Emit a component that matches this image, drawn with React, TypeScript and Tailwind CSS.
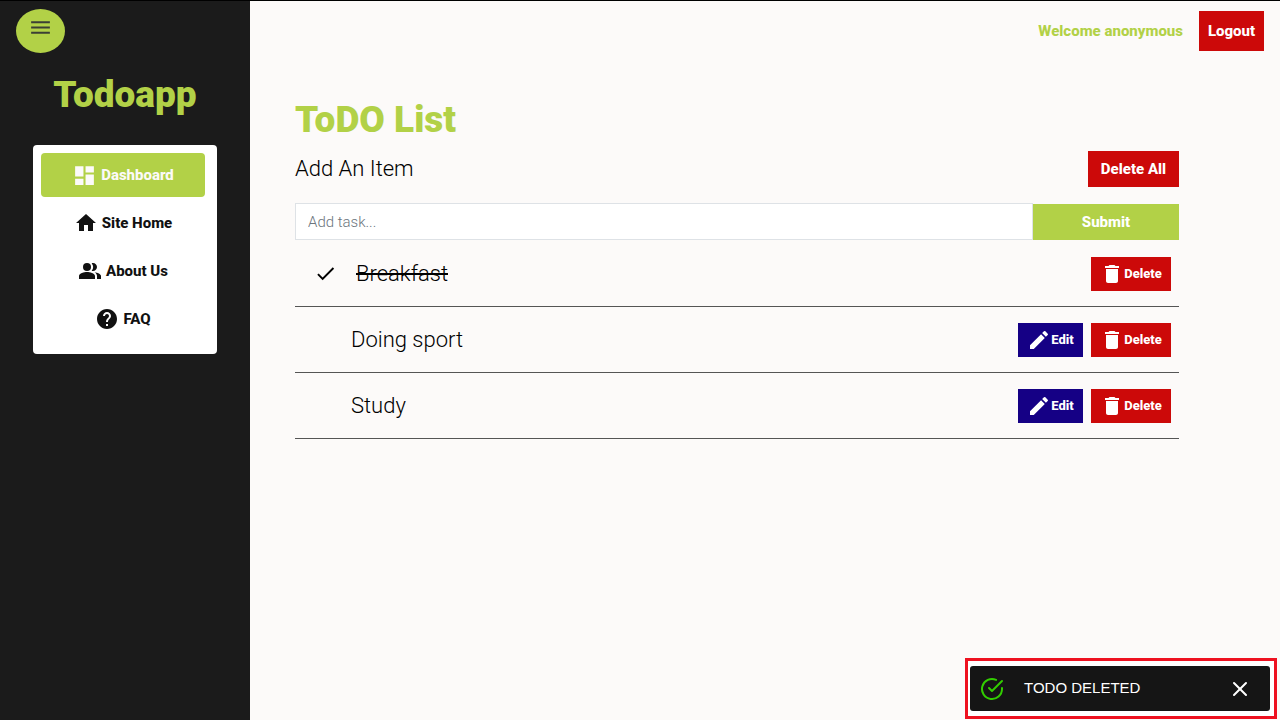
import type { ReactNode } from "react";
import { MdCheck, MdDashboard, MdDelete, MdEdit, MdHelp, MdHome, MdMenu, MdPeopleAlt } from "react-icons/md";
import { FiCheckCircle } from "react-icons/fi";
import { X } from "lucide-react";

type Todo = { id: number; title: string; done: boolean };

const todos: Todo[] = [
  { id: 1, title: "Breakfast", done: true },
  { id: 2, title: "Doing sport", done: false },
  { id: 3, title: "Study", done: false },
];

function NavItem({ icon, label, active = false }: { icon: ReactNode; label: string; active?: boolean }) {
  return (
    <li>
      <a
        href="#"
        aria-current={active ? "page" : undefined}
        className={`flex h-11 items-center justify-center gap-1 rounded font-extrabold ${
          active ? "bg-[#b2d147] text-[#fcfaf9]" : "text-[#111]"
        }`}
      >
        {icon}
        {label}
      </a>
    </li>
  );
}

function Sidebar() {
  return (
    <aside className="w-[250px] shrink-0 bg-[#1b1b1b]">
      <div className="px-4 pt-2">
        <button aria-label="Toggle menu" className="flex h-11 w-[49px] items-start justify-center rounded-[50%] bg-[#b2d147] pt-[6px] text-[#3b3f35]">
          <MdMenu size={25} />
        </button>
      </div>
      <h1 className="mt-5 text-center text-[37px] leading-[44px] font-black text-[#b2d147]">Todoapp</h1>
      <nav className="mx-[33px] mt-7 rounded bg-white pt-2 pr-3 pb-[13px] pl-2">
        <ul className="flex flex-col gap-1">
          <NavItem active icon={<MdDashboard size={25} />} label="Dashboard" />
          <NavItem icon={<MdHome size={24} />} label="Site Home" />
          <NavItem icon={<MdPeopleAlt size={24} />} label="About Us" />
          <NavItem icon={<MdHelp size={24} />} label="FAQ" />
        </ul>
      </nav>
    </aside>
  );
}

function TodoRow({ todo }: { todo: Todo }) {
  return (
    <li className="flex h-[66px] items-center gap-2 border-b border-[#555] pr-2">
      {todo.done && <MdCheck size={23} className="ml-[19px]" aria-label="Done" />}
      <span className={`grow text-[22px] leading-8 font-light ${todo.done ? "ml-[11px] line-through" : "ml-14"}`}>
        {todo.title}
      </span>
      {!todo.done && (
        <button className="flex h-[34px] w-[65px] items-center justify-center bg-[#150085] text-[13px] font-extrabold text-white">
          <MdEdit size={24} />
          Edit
        </button>
      )}
      <button className="flex h-[34px] w-20 items-center justify-center bg-[#cc0909] text-[13px] font-extrabold text-white">
        <MdDelete size={24} />
        Delete
      </button>
    </li>
  );
}

function Toast() {
  return (
    <div role="status" className="fixed right-[3px] bottom-px border-[3px] border-[#ee1120] bg-white py-[5px] pr-1 pl-[2px]">
      <div className="flex h-[45px] w-[300px] items-center rounded-[3px] bg-[#151515] pr-[18px] pl-[10px] font-['Liberation_Sans',sans-serif] text-[15px] text-white">
        <FiCheckCircle size={24} className="text-[#32cd00]" />
        <span className="ml-5 grow">TODO DELETED</span>
        <button aria-label="Dismiss">
          <X size={24} />
        </button>
      </div>
    </div>
  );
}

export default function App() {
  return (
    <div className="flex min-h-screen border-t border-black bg-[#fcfaf9] font-[Roboto,sans-serif] text-[15px] text-black">
      <Sidebar />
      <main className="min-w-0 grow">
        <header className="flex items-center justify-end gap-4 pt-[10px] pr-4">
          <span className="font-extrabold text-[#b2d147]">Welcome anonymous</span>
          <button className="h-10 w-[65px] bg-[#cc0909] font-extrabold text-white">Logout</button>
        </header>
        <section className="pt-[46px] pr-[101px] pl-[45px]">
          <h2 className="text-[37px] leading-[46px] font-black text-[#b2d147]">ToDO List</h2>
          <div className="mt-2 flex items-center justify-between">
            <label htmlFor="task" className="text-[22px] leading-8 font-light">
              Add An Item
            </label>
            <button className="h-9 w-[91px] bg-[#cc0909] font-extrabold text-white">Delete All</button>
          </div>
          <form className="mt-4 flex h-[37px] items-end" onSubmit={(event) => event.preventDefault()}>
            <input
              id="task"
              type="text"
              placeholder="Add task..."
              className="h-full min-w-0 grow border border-[#dee2e6] bg-white px-3 font-light outline-none placeholder:text-[#6c757d]"
            />
            <button type="submit" className="h-9 w-[146px] bg-[#b2d147] font-extrabold text-white">
              Submit
            </button>
          </form>
          <ul className="pt-px">
            {todos.map((todo) => (
              <TodoRow key={todo.id} todo={todo} />
            ))}
          </ul>
        </section>
      </main>
      <Toast />
    </div>
  );
}
